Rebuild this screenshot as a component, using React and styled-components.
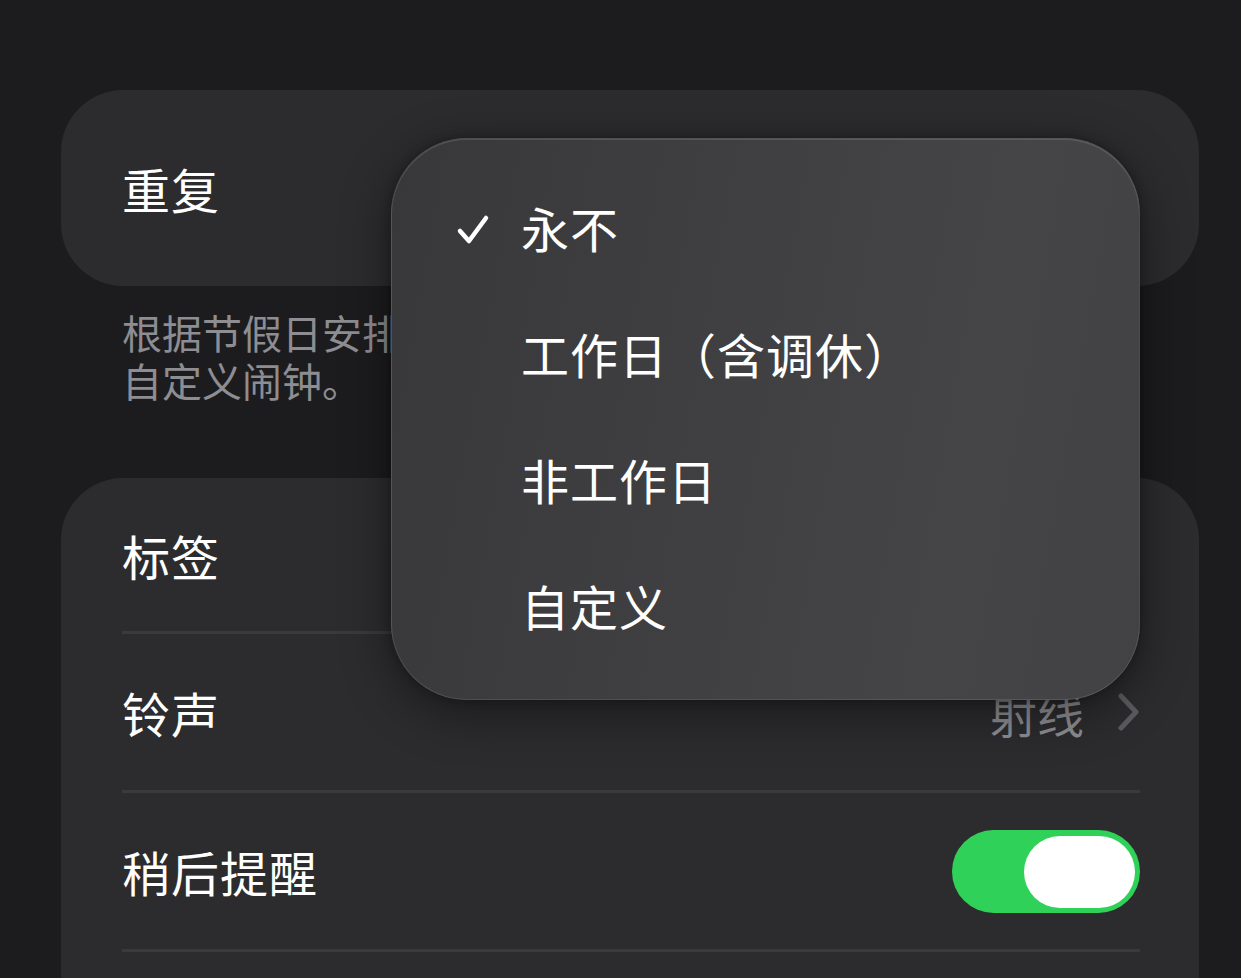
import React from 'react';
import styled, { createGlobalStyle } from 'styled-components';

const GlobalStyle = createGlobalStyle`
  html, body {
    margin: 0;
    padding: 0;
    background: #1c1c1e;
  }
  body {
    font-family: "Noto Sans CJK SC", "Noto Sans", sans-serif;
    -webkit-font-smoothing: antialiased;
  }
`;

const Page = styled.div`
  position: relative;
  width: 1241px;
  height: 978px;
  overflow: hidden;
  box-sizing: border-box;
  padding: 90px 42px 0 61px;
  background: #1c1c1e;
`;

const Card = styled.div`
  background: #2c2c2e;
  border-radius: 62px;
  padding: 0 59px 0 61px;
`;

const SingleRow = styled.div`
  height: 196px;
  display: flex;
  align-items: center;
`;

const Label = styled.span`
  color: #ffffff;
  font-size: 48px;
  line-height: 1;
  letter-spacing: 1px;
`;

const Footnote = styled.div`
  margin-top: 22px;
  padding-left: 61px;
  color: #8d8d92;
  font-size: 40px;
  white-space: nowrap;
`;

const FootLine = styled.div`
  height: 48px;
  line-height: 48px;
`;

const ListCard = styled(Card)`
  margin-top: 74px;
  padding-bottom: 140px;
`;

const Row = styled.div`
  height: ${(p) => (p.$first ? '153px' : '156px')};
  display: flex;
  align-items: center;
  justify-content: space-between;
  border-bottom: 3px solid #3a3a3c;
`;

const Detail = styled.div`
  display: flex;
  align-items: center;
  gap: 34px;
  color: #8e8e93;
  font-size: 47px;
  line-height: 1;
`;

const Toggle = styled.div`
  position: relative;
  width: 188px;
  height: 83px;
  border-radius: 42px;
  background: #30d158;
`;

const Knob = styled.div`
  position: absolute;
  right: 5px;
  top: 6px;
  width: 111px;
  height: 72px;
  border-radius: 36px;
  background: #ffffff;
`;

const Menu = styled.div`
  position: absolute;
  left: 391px;
  top: 138px;
  width: 749px;
  height: 562px;
  box-sizing: border-box;
  padding: 29px 0;
  border-radius: 76px;
  background: linear-gradient(100deg, #38383b 0%, #3f3f42 40%, #454548 75%, #424245 100%);
  border: 1.5px solid rgba(255, 255, 255, 0.1);
  box-shadow: 0 12px 50px rgba(0, 0, 0, 0.45), 0 0 10px rgba(0, 0, 0, 0.3),
    inset 0 1px 0 rgba(255, 255, 255, 0.12);
`;

const MenuItem = styled.div`
  height: 126px;
  box-sizing: border-box;
  padding: 0 0 9px 129px;
  display: flex;
  align-items: center;
  position: relative;
  color: #ffffff;
  font-size: 48px;
  line-height: 1;
  letter-spacing: 1px;
`;

const Check = styled.svg`
  position: absolute;
  left: 64px;
  top: 50%;
  margin-top: -17px;
`;

function Chevron() {
  return (
    <svg width="22" height="38" viewBox="0 0 22 38">
      <polyline
        points="3,3 18,19 3,35"
        fill="none"
        stroke="#5c5c60"
        strokeWidth="5"
        strokeLinecap="round"
        strokeLinejoin="round"
      />
    </svg>
  );
}

const options = ['永不', '工作日（含调休）', '非工作日', '自定义'];

function App() {
  return (
    <>
      <GlobalStyle />
      <Page>
        <Card>
          <SingleRow>
            <Label>重复</Label>
          </SingleRow>
        </Card>
        <Footnote>
          <FootLine>根据节假日安排重复闹钟，如需在特定日期响铃，请使用</FootLine>
          <FootLine>自定义闹钟。</FootLine>
        </Footnote>
        <ListCard>
          <Row $first>
            <Label>标签</Label>
            <Detail>闹钟</Detail>
          </Row>
          <Row>
            <Label>铃声</Label>
            <Detail>
              射线
              <Chevron />
            </Detail>
          </Row>
          <Row>
            <Label>稍后提醒</Label>
            <Toggle>
              <Knob />
            </Toggle>
          </Row>
        </ListCard>
        <Menu>
          {options.map((opt, i) => (
            <MenuItem key={opt}>
              {i === 0 && (
                <Check width="34" height="32" viewBox="0 0 34 32">
                  <polyline
                    points="4,17 13,27 30,4"
                    fill="none"
                    stroke="#ffffff"
                    strokeWidth="4.5"
                    strokeLinecap="round"
                    strokeLinejoin="round"
                  />
                </Check>
              )}
              {opt}
            </MenuItem>
          ))}
        </Menu>
      </Page>
    </>
  );
}

export default App;
